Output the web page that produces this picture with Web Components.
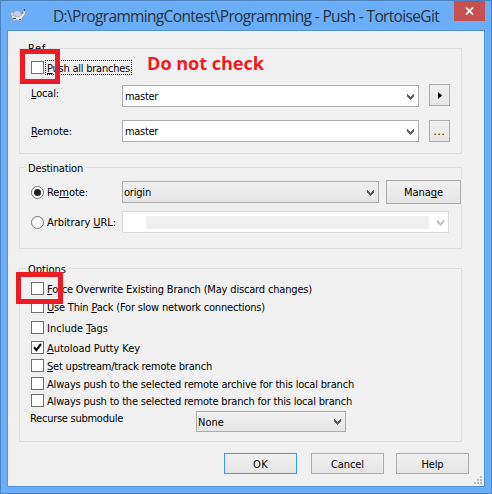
<!DOCTYPE html>
<html lang="en">
<head>
<meta charset="utf-8">
<title>Push - TortoiseGit</title>
<style>
html,body{margin:0;height:100%;overflow:hidden}
body{font:11px/13px "DejaVu Sans Condensed","DejaVu Sans",sans-serif;font-stretch:condensed;color:#000}
</style>
</head>
<body>
<push-dialog></push-dialog>
<script>
const define = (name, html, init) => customElements.define(name, class extends HTMLElement {
  connectedCallback() {
    if (this.shadowRoot) return;
    const root = this.attachShadow({mode: 'open'});
    root.innerHTML = html;
    if (init) init(this, root);
  }
});

/* Text run whose letter spacing is set so that it fills the width in "w". */
define('fit-text', `<style>:host{display:inline-block;white-space:pre;flex:none}
::slotted(u){text-decoration:underline 1px;text-underline-offset:1px;text-decoration-skip-ink:none}span{display:inline-block}
</style><span><slot></slot></span>`, (host, root) => {
  const w = +host.getAttribute('w');
  const s = root.querySelector('span');
  const n = host.textContent.length;
  s.style.letterSpacing = ((w - s.getBoundingClientRect().width) / n) + 'px';
  host.style.width = w + 'px';
});

define('group-box', `<style>
:host{display:block;box-sizing:border-box;border:1px solid #dcdcdc;width:443px;padding:0 0 0 11px}
header{height:12px;margin:0 0 0 -5px;display:flex}
header slot{display:block;background:#f0f0f0;height:13px;margin-top:-7px;padding:0 2px}
</style><header><slot name="legend"></slot></header><slot></slot>`);

define('form-row', `<style>:host{display:flex;align-items:flex-start}</style><slot></slot>`);

define('check-item', `<style>
:host{display:flex;height:13px}
i{box-sizing:border-box;width:13px;height:13px;border:1px solid #707070;background:#fff;margin-right:2px;flex:none}
svg{display:none}:host([checked]) svg{display:block}
div{height:12px;line-height:13px;padding:1px 0 0 1px}
:host([focused]) div{outline:1px dotted #000;padding-right:1px}
</style><i><svg width="11" height="11" viewBox="0 0 11 11"><path d="M2 5.3 4.4 8 9 2" fill="none" stroke="#111" stroke-width="2.1"/></svg></i><div><slot></slot></div>`);

define('radio-item', `<style>
:host{display:flex;height:13px;width:91px}
i{box-sizing:border-box;width:13px;height:13px;border:1px solid #707070;border-radius:50%;background:#fff;margin-right:3px;flex:none;display:grid;place-items:center}
:host([checked]) i::after{content:"";width:7px;height:7px;border-radius:50%;background:#222}
slot{display:block}
</style><i></i><slot></slot>`);

define('combo-box', `<style>
:host{display:flex;align-items:center;box-sizing:border-box;height:22px;border:1px solid #acacac;background:#fff;padding:0 4px 0 2px;flex:none}
:host([list]){background:linear-gradient(#f0f0f0,#e5e5e5);padding-left:1px}
:host([disabled]){border-color:#d9d9d9;color:#bfbfbf;padding-left:3px}
slot{display:flex;flex:1;padding-top:1px}
svg{color:#606060;flex:none;margin-top:1px}:host([disabled]) svg{color:#bfbfbf}
</style><slot></slot><svg width="7" height="6" viewBox="0 0 7 6"><path d="M0 0h1v1h1v1h1v1h1V2h1V1h1V0h1v3H6v1H5v1H4v1H3V5H2V4H1V3H0z" fill="currentColor"/></svg>`);

define('push-button', `<style>
:host{display:flex;align-items:center;justify-content:center;box-sizing:border-box;border:1px solid #acacac;background:linear-gradient(#f0f0f0,#e5e5e5);height:21px;width:73px;flex:none;padding-top:1px}
:host([default]){border-color:#3399ff}
</style><slot></slot>`);

define('blank-field', `<style>:host{display:block;background:#f0f0f0;height:13px;width:283px;margin-left:20px}</style>`);

define('red-mark', `<style>:host{position:absolute;box-sizing:border-box;border:5px solid #ed1c24;z-index:3}</style>`);

define('title-bar', `<style>
:host{display:flex;height:29px;font:15.5px/20px "Open Sans","Noto Sans",sans-serif;font-stretch:normal;color:#26303c}
.icon{margin:8px 0 0 9px;flex:none}
.title{margin:5px 0 0 26px}
.close{width:31px;height:20px;background:#c75050;margin:0 6px 0 auto;display:grid;place-items:center}
</style>
<svg class="icon" width="17" height="14" viewBox="0 0 17 14">
<path d="M3 3.5 1 3 .5 5 2 7l-1 2 2 .5-.5 2L5 12l1-1 3 1 3-.5V9l2-2 1.500-3L15 1.500l-2 .5-1 3z" fill="#e3e5e4" stroke="#87939c" stroke-width=".7"/>
<path d="M3 6.500C3 3 5 1.500 7.500 1.500S11.500 3.500 11.500 6.500L8 8z" fill="#c3ccf8" stroke="#8c98c8" stroke-width=".6"/>
<path d="M14.500 0v2M13 3.500v1M3 9.500h3M9 10.500h2" fill="none" stroke="#4a4d50" stroke-width="1"/></svg>
<fit-text class="title" w="386">D:\\ProgrammingContest\\Programming - Push - TortoiseGit</fit-text>
<div class="close"><svg width="9" height="8" viewBox="0 0 9 8"><path d="M1 .5 8 7.5M8 .5 1 7.5" stroke="#fff" stroke-width="1.7"/></svg></div>`,
);

define('size-grip', `<style>:host{position:absolute;right:2px;bottom:2px;line-height:0}</style>
<svg width="8" height="8" viewBox="0 0 8 8" fill="#bdbdbd"><path d="M6 0h2v2H6zM3 3h2v2H3zM6 3h2v2H6zM0 6h2v2H0zM3 6h2v2H3zM6 6h2v2H6z"/></svg>`);

define('push-dialog', `<style>
:host{display:flex;flex-direction:column;position:relative;box-sizing:border-box;width:492px;height:494px;background:#6badf6;border:1px solid #4c82bd;padding:0 6px 6px}
title-bar{margin:0 -6px}
main{flex:1;box-sizing:border-box;border:1px solid #5490d4;background:#f0f0f0;padding:17px 0 0 11px;position:relative;min-height:0}
.lab{width:91px;flex:none}
.foot{display:flex;margin:11px 0 0 205px}
.note{position:absolute;left:146px;top:50px;font:bold 18.2px/24px "Open Sans",sans-serif;font-stretch:normal;color:#ed1c24;z-index:3}
</style>
<title-bar></title-bar>
<main>
 <group-box style="height:106px">
  <fit-text slot="legend" w="18">Ref</fit-text>
  <check-item focused><fit-text w="83"><u>P</u>ush all branches</fit-text></check-item>
  <form-row style="margin-top:11px">
   <div class="lab" style="margin-top:2px"><fit-text w="28"><u>L</u>ocal:</fit-text></div>
   <combo-box style="width:297px"><fit-text w="33">master</fit-text></combo-box>
   <push-button style="width:21px;height:22px;margin:-1px 0 0 10px"><svg width="4" height="7" viewBox="0 0 4 7"><path d="M0 0 4 3.5 0 7z"/></svg></push-button>
  </form-row>
  <form-row style="margin-top:13px">
   <div class="lab" style="margin-top:5px"><fit-text w="41"><u>R</u>emote:</fit-text></div>
   <combo-box style="width:297px"><fit-text w="33">master</fit-text></combo-box>
   <push-button style="width:21px;height:22px;margin-left:10px"><fit-text w="12">...</fit-text></push-button>
  </form-row>
 </group-box>
 <group-box style="height:82px;margin-top:13px">
  <fit-text slot="legend" w="55" style="margin-top:1px">Destination</fit-text>
  <form-row>
   <radio-item checked style="margin-top:6px"><fit-text w="41">Re<u>m</u>ote:</fit-text></radio-item>
   <combo-box list style="width:257px;margin-top:1px"><fit-text w="27">origin</fit-text></combo-box>
   <push-button style="width:75px;height:24px;margin-left:7px;box-shadow:0 0 0 1px #f0f0f0"><fit-text w="39">Mana<u>g</u>e</fit-text></push-button>
  </form-row>
  <form-row style="margin-top:7px">
   <radio-item style="margin-top:5px"><fit-text w="69">Arbitrary <u>U</u>RL:</fit-text></radio-item>
   <combo-box disabled style="width:327px"><blank-field></blank-field></combo-box>
  </form-row>
 </group-box>
 <group-box style="height:174px;margin-top:19px">
  <fit-text slot="legend" w="38" style="margin-top:1px">Options</fit-text>
  <check-item style="margin-top:1px"><fit-text w="265"><u>F</u>orce Overwrite Existing Branch (May discard changes)</fit-text></check-item>
  <check-item style="margin-top:5px"><fit-text w="218"><u>U</u>se Thin <u>P</u>ack (For slow network connections)</fit-text></check-item>
  <check-item style="margin-top:8px"><fit-text w="61">Include <u>T</u>ags</fit-text></check-item>
  <check-item checked style="margin-top:7px"><fit-text w="93"><u>A</u>utoload Putty Key</fit-text></check-item>
  <check-item style="margin-top:5px"><fit-text w="165"><u>S</u>et upstream/track remote branch</fit-text></check-item>
  <check-item style="margin-top:5px"><fit-text w="307">Always push to the selected remote archive for this local branch</fit-text></check-item>
  <check-item style="margin-top:4px"><fit-text w="305">Always push to the selected remote branch for this local branch</fit-text></check-item>
  <form-row style="margin-top:4px">
   <fit-text w="93" style="margin-top:1px;margin-left:-1px">Recurse submodule</fit-text>
   <combo-box list style="width:150px;height:21px;margin-left:73px"><fit-text w="26">None</fit-text></combo-box>
  </form-row>
 </group-box>
 <div class="foot">
  <push-button default><fit-text w="15">OK</fit-text></push-button>
  <push-button style="margin-left:14px"><fit-text w="33">Cancel</fit-text></push-button>
  <push-button style="margin-left:12px"><fit-text w="22">Help</fit-text></push-button>
 </div>
 <size-grip></size-grip>
</main>
<fit-text class="note" w="117">Do not check</fit-text>
<red-mark style="left:19px;top:48px;width:40px;height:35px"></red-mark>
<red-mark style="left:15px;top:271px;width:47px;height:32px"></red-mark>`);
</script>
</body>
</html>
